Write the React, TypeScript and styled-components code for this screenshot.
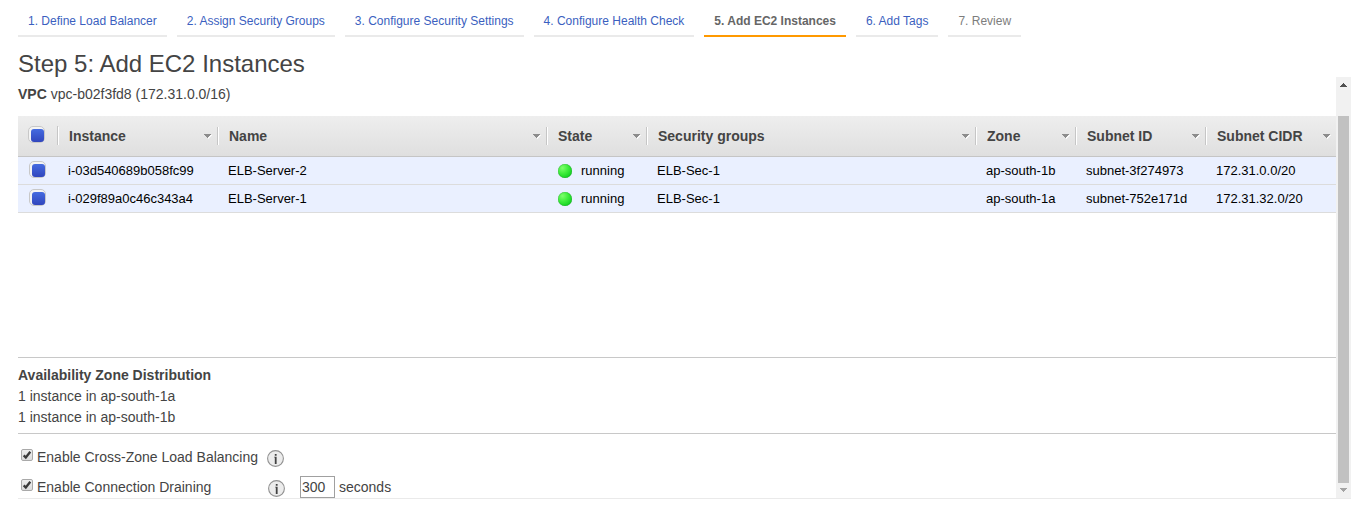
import React from "react";
import styled, { createGlobalStyle } from "styled-components";

const GlobalStyle = createGlobalStyle`
  * { box-sizing: border-box; }
  body {
    margin: 0;
    background: #fff;
    color: #444;
    font: 14px/21px "Liberation Sans", Arial, sans-serif;
    overflow: hidden;
  }
`;

const Page = styled.div`
  height: 506px;
  padding-left: 18px;
  display: flex;
  flex-direction: column;
`;

const Steps = styled.nav`
  display: flex;
  gap: 10px;
  height: 37px;
  flex: none;
`;

type StepState = "link" | "active" | "pending";
const stepColors = { link: "#3b5fc0", active: "#666", pending: "#7d7d7d" };

const Step = styled.div<{ $state: StepState }>`
  padding: 11px 10px 0;
  border-bottom: 2px solid ${(p) => (p.$state === "active" ? "#ff9900" : "#eaeaea")};
  color: ${(p) => stepColors[p.$state]};
  font-size: 12px;
  font-weight: ${(p) => (p.$state === "active" ? 700 : 400)};
  white-space: nowrap;
`;

const Title = styled.h1`
  margin: 0;
  height: 40px;
  padding-top: 11px;
  font-size: 24px;
  line-height: 32px;
  font-weight: 400;
`;

const Body = styled.div`
  display: flex;
  width: 1333px;
  height: 422px;
  border-bottom: 1px solid #eaeaea;
`;

const Content = styled.main`
  width: 1318px;
  display: flex;
  flex-direction: column;
`;

const Vpc = styled.div`
  height: 39px;
  padding-top: 7px;
`;

const columns = "40px 160px 329px 100px 329px 100px 130px 130px";

const TableArea = styled.section`
  height: 242px;
  border-bottom: 1px solid #c8c8c8;
`;

const HeaderRow = styled.div`
  display: grid;
  grid-template-columns: ${columns};
  height: 41px;
  background: linear-gradient(#eeeeee, #dfdfdf);
  border-bottom: 1px solid #c5c5c5;
`;

const HeaderCell = styled.div<{ $last?: boolean }>`
  display: flex;
  align-items: center;
  justify-content: space-between;
  padding: 0 ${(p) => (p.$last ? 5 : 6)}px 0 11px;
  font-weight: 700;
  background:
    linear-gradient(#fff, #fff) 0 11px / 1px 18px no-repeat,
    ${(p) =>
      p.$last
        ? "none"
        : "linear-gradient(#c6c6c6, #c6c6c6) right 11px / 1px 18px no-repeat"};
`;

const SelectAllCell = styled.div`
  padding: 10px 0 0 10px;
  background: linear-gradient(#c6c6c6, #c6c6c6) right 10px / 1px 19px no-repeat;
`;

const Row = styled.div`
  display: grid;
  grid-template-columns: ${columns};
  height: 28px;
  background: #eaf0ff;
  border-bottom: 1px solid #dcdcdc;
`;

const Cell = styled.div`
  display: flex;
  align-items: center;
  padding-left: 10px;
  color: #000;
  font-size: 13px;
  white-space: nowrap;
`;

const SelectCell = styled.div`
  padding: 4px 0 0 11px;
`;

const SelectBox = styled.div`
  width: 17px;
  height: 17px;
  padding: 2px 0 0 2px;
  border: 1px solid #c8c8c8;
  border-radius: 5px;
  background: #f4f4f4;
  &::before {
    content: "";
    display: block;
    width: 13px;
    height: 13px;
    border-radius: 3px;
    background: linear-gradient(#456be0, #3146bd);
  }
`;

const StatusDot = styled.span`
  width: 14px;
  height: 14px;
  margin: 1px 9px 0 1px;
  border-radius: 50%;
  background: radial-gradient(circle at 32% 28%, #7dff6c, #3fee3c 40%, #0acb1c 85%);
  box-shadow: inset 0 0 1px #067d10;
`;

const Distribution = styled.section`
  height: 76px;
  padding-top: 7px;
  border-bottom: 1px solid #c8c8c8;
`;

const OptionRow = styled.div<{ $first?: boolean }>`
  display: flex;
  align-items: flex-start;
  height: ${(p) => (p.$first ? 40 : 24)}px;
  padding: ${(p) => (p.$first ? 13 : 3)}px 0 0 3px;
`;

const OptionLabel = styled.span<{ $width: number }>`
  width: ${(p) => p.$width}px;
  padding-left: 4px;
  white-space: nowrap;
`;

const CheckBox = styled.span`
  width: 12px;
  height: 12px;
  margin-top: 2px;
  border: 1px solid #a9a9a9;
  border-radius: 2px;
  background: linear-gradient(#ededed, #dcdcdc);
  svg { display: block; }
`;

const InfoSvg = styled.svg`
  width: 17px;
  height: 17px;
  margin-top: 3px;
`;

const SecondsInput = styled.input`
  width: 35px;
  height: 22px;
  margin: -1px 4px 0 15px;
  padding: 0 0 0 1px;
  border: 1px solid #a0a0a0;
  border-radius: 0;
  background: #fff;
  color: #444;
  font: 14px "Liberation Sans", Arial, sans-serif;
`;

const Scrollbar = styled.div`
  width: 15px;
  display: flex;
  flex-direction: column;
  align-items: center;
  background: #f1f1f1;
`;

const ScrollButton = styled.div<{ $height: number; $top: number }>`
  display: flex;
  justify-content: center;
  width: 15px;
  height: ${(p) => p.$height}px;
  padding-top: ${(p) => p.$top}px;
`;

const ScrollThumb = styled.div`
  width: 11px;
  height: 367px;
  background: #c1c1c1;
`;

const SortArrow = () => (
  <svg width="8" height="6" viewBox="0 0 8 6" shapeRendering="crispEdges">
    <path d="M0 2h8L4 6z" fill="#fafafa" />
    <path d="M0 1h7v1H6v1H5v1H4v1H3V4H2V3H1V2H0z" fill="#8c8c8c" />
  </svg>
);

const Checked = () => (
  <CheckBox>
    <svg width="10" height="10" viewBox="0 0 10 10">
      <path d="M1.7 5.4 3.8 7.5 8.3 1.7" fill="none" stroke="#3a3a3a" strokeWidth="2.3" />
    </svg>
  </CheckBox>
);

const Info = () => (
  <InfoSvg viewBox="0 0 17 17">
    <circle cx="8.5" cy="8.5" r="7.9" fill="#ececec" stroke="#929292" strokeWidth="1.1" />
    <path d="M7.8 4h1.8v1.7H7.8zM7.2 6.8h2.4V14H7.8V7.6h-.6z" fill="#424242" />
  </InfoSvg>
);

const steps: { label: string; state: StepState }[] = [
  { label: "1. Define Load Balancer", state: "link" },
  { label: "2. Assign Security Groups", state: "link" },
  { label: "3. Configure Security Settings", state: "link" },
  { label: "4. Configure Health Check", state: "link" },
  { label: "5. Add EC2 Instances", state: "active" },
  { label: "6. Add Tags", state: "link" },
  { label: "7. Review", state: "pending" },
];

const headings = ["Instance", "Name", "State", "Security groups", "Zone", "Subnet ID", "Subnet CIDR"];

const instances = [
  { id: "i-03d540689b058fc99", name: "ELB-Server-2", zone: "ap-south-1b", subnet: "subnet-3f274973", cidr: "172.31.0.0/20" },
  { id: "i-029f89a0c46c343a4", name: "ELB-Server-1", zone: "ap-south-1a", subnet: "subnet-752e171d", cidr: "172.31.32.0/20" },
];

export default function App() {
  return (
    <Page>
      <GlobalStyle />
      <Steps>
        {steps.map((s) => (
          <Step key={s.label} $state={s.state}>{s.label}</Step>
        ))}
      </Steps>
      <Title>Step 5: Add EC2 Instances</Title>
      <Body>
        <Content>
          <Vpc><b>VPC</b> vpc-b02f3fd8 (172.31.0.0/16)</Vpc>
          <TableArea>
            <HeaderRow>
              <SelectAllCell><SelectBox /></SelectAllCell>
              {headings.map((h, i) => (
                <HeaderCell key={h} $last={i === headings.length - 1}>
                  {h}
                  <SortArrow />
                </HeaderCell>
              ))}
            </HeaderRow>
            {instances.map((r) => (
              <Row key={r.id}>
                <SelectCell><SelectBox /></SelectCell>
                <Cell>{r.id}</Cell>
                <Cell>{r.name}</Cell>
                <Cell><StatusDot />running</Cell>
                <Cell>ELB-Sec-1</Cell>
                <Cell>{r.zone}</Cell>
                <Cell>{r.subnet}</Cell>
                <Cell>{r.cidr}</Cell>
              </Row>
            ))}
          </TableArea>
          <Distribution>
            <b>Availability Zone Distribution</b>
            <div>1 instance in ap-south-1a</div>
            <div>1 instance in ap-south-1b</div>
          </Distribution>
          <OptionRow $first>
            <Checked />
            <OptionLabel $width={234}>Enable Cross-Zone Load Balancing</OptionLabel>
            <Info />
          </OptionRow>
          <OptionRow>
            <Checked />
            <OptionLabel $width={235}>Enable Connection Draining</OptionLabel>
            <Info />
            <SecondsInput defaultValue="300" />
            seconds
          </OptionRow>
        </Content>
        <Scrollbar>
          <ScrollButton $height={39} $top={6}>
            <svg width="7" height="4" viewBox="0 0 7 4" shapeRendering="crispEdges">
              <path d="M0 4V3h1V2h1V1h1V0h1v1h1v1h1v1h1v1z" fill="#505050" />
            </svg>
          </ScrollButton>
          <ScrollThumb />
          <ScrollButton $height={15} $top={5}>
            <svg width="7" height="4" viewBox="0 0 7 4" shapeRendering="crispEdges">
              <path d="M0 0v1h1v1h1v1h1v1h1V3h1V2h1V1h1V0z" fill="#a3a3a3" />
            </svg>
          </ScrollButton>
        </Scrollbar>
      </Body>
    </Page>
  );
}
